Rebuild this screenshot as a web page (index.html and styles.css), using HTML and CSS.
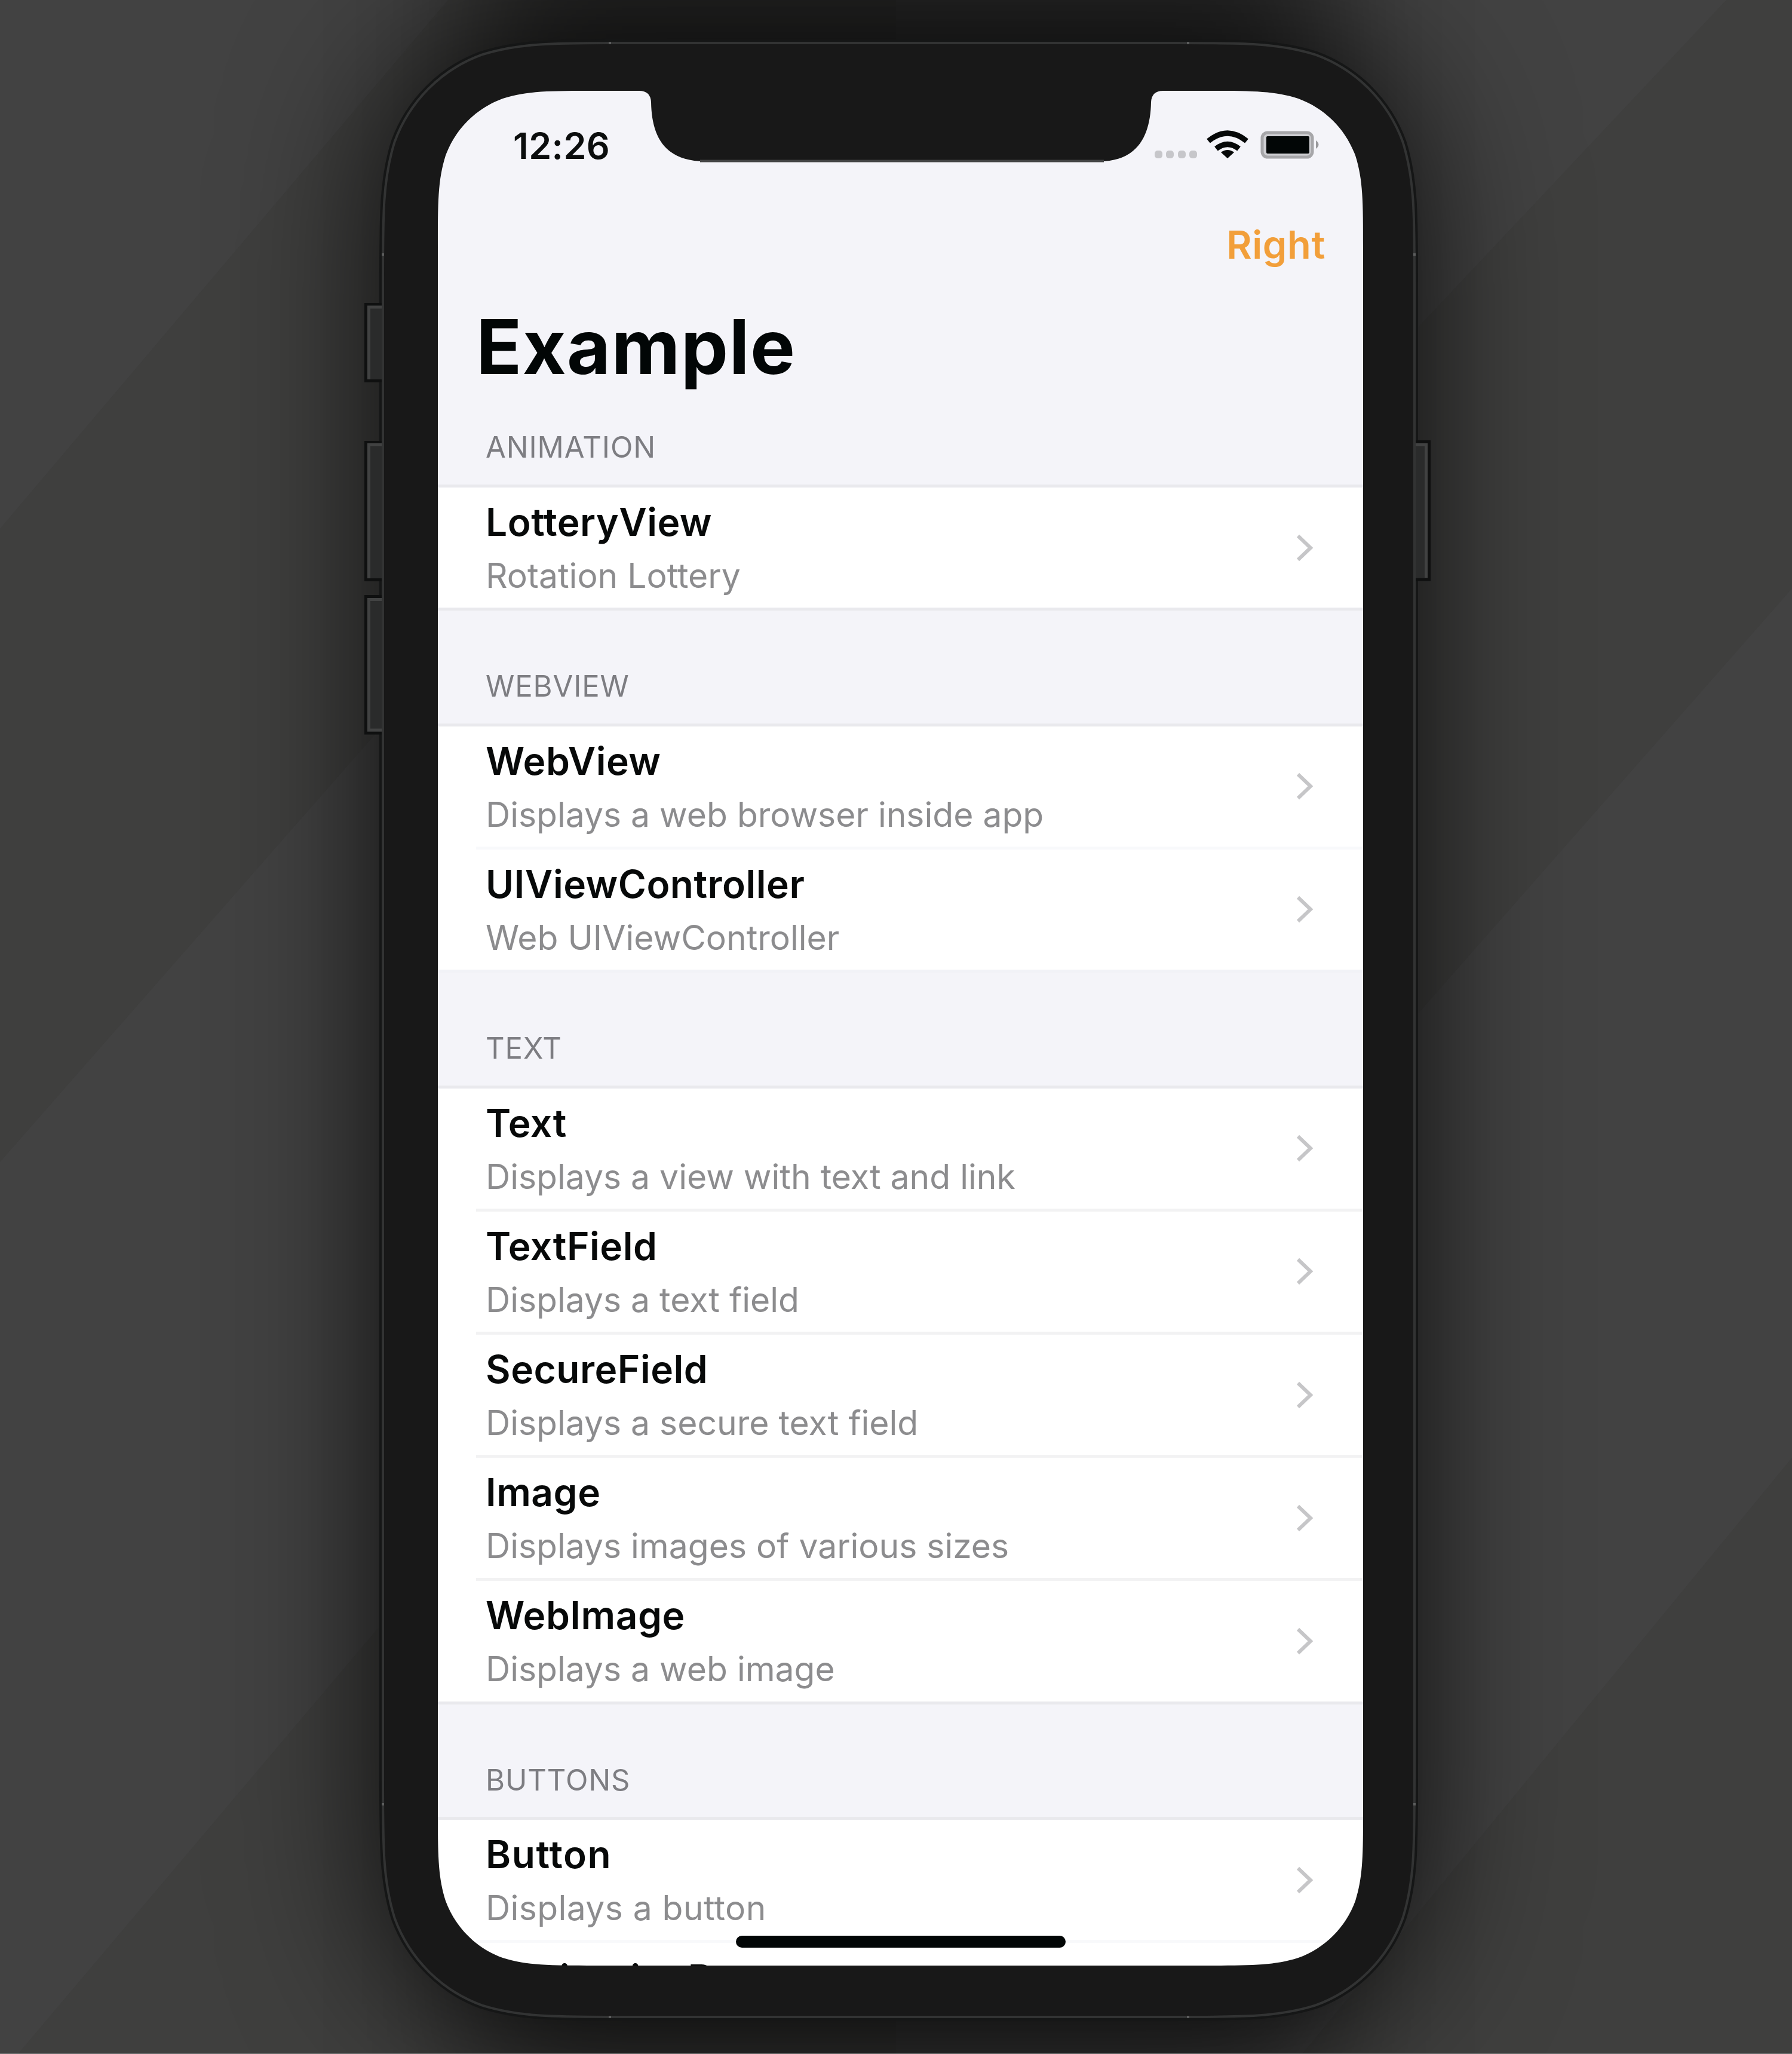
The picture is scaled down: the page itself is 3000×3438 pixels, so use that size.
FILE: index.html
```html
<!DOCTYPE html>
<html lang="en">
<head>
<meta charset="utf-8">
<title>Example</title>
<link rel="stylesheet" href="styles.css">
</head>
<body>
<main class="stage">
  <svg class="backdrop" viewBox="0 0 3000 3438" aria-hidden="true">
    <rect width="3000" height="3438" fill="#424242"/>
    <g fill="#3f3f3e">
      <path d="M0 885L750 0H1500V235L0 1945Z"/>
      <path d="M30 3438L1500 1700V3438Z"/>
      <path d="M2890 0H3000V985L1500 2690V1476Z"/>
      <path d="M3000 2440L2180 3438H3000Z"/>
    </g>
  </svg>
  <div class="shade"></div>
  <div class="phone-shadow"></div>
  <div class="screen">
    <header class="status-bar">
      <span class="time">12:26</span>
      <svg class="status-icons" viewBox="0 0 284 56" aria-hidden="true">
        <g fill="#c6c6ca"><rect x="0" y="39" width="13" height="13" rx="5"/><rect x="19" y="39" width="13" height="13" rx="5"/><rect x="39" y="39" width="13" height="13" rx="5"/><rect x="58" y="39" width="13" height="13" rx="5"/></g>
        <g fill="none" stroke="#060808" stroke-width="9"><path d="M90 23Q122 -3 154 23"/><path d="M103 36Q122 21 141 36"/></g>
        <path fill="#060808" d="M111 42Q122 34 133 42L122 52Z"/>
        <rect x="180" y="9" width="84" height="41" rx="9" fill="#cfcfd3" stroke="#a6a6a9" stroke-width="5"/>
        <rect x="187" y="15" width="72" height="29" rx="2" fill="#020606"/>
        <path fill="#9a9a9d" d="M270 22Q279 29 270 36Z"/>
      </svg>
    </header>
    <nav class="nav-bar"><a class="nav-action">Right</a></nav>
    <h1 class="title">Example</h1>
    <section class="group first">
      <h2 class="group-name">ANIMATION</h2>
      <ul class="rows">
        <li class="row"><div class="label"><b>LotteryView</b><span>Rotation Lottery</span></div><svg class="chevron" viewBox="0 0 30 48"><path d="M3 4L24 24L3 44"/></svg></li>
      </ul>
    </section>
    <section class="group">
      <h2 class="group-name">WEBVIEW</h2>
      <ul class="rows faint-end">
        <li class="row"><div class="label"><b>WebView</b><span>Displays a web browser inside app</span></div><svg class="chevron" viewBox="0 0 30 48"><path d="M3 4L24 24L3 44"/></svg></li>
        <li class="row faint"><div class="label"><b>UIViewController</b><span>Web UIViewController</span></div><svg class="chevron" viewBox="0 0 30 48"><path d="M3 4L24 24L3 44"/></svg></li>
      </ul>
    </section>
    <section class="group">
      <h2 class="group-name">TEXT</h2>
      <ul class="rows">
        <li class="row"><div class="label"><b>Text</b><span>Displays a view with text and link</span></div><svg class="chevron" viewBox="0 0 30 48"><path d="M3 4L24 24L3 44"/></svg></li>
        <li class="row"><div class="label"><b>TextField</b><span>Displays a text field</span></div><svg class="chevron" viewBox="0 0 30 48"><path d="M3 4L24 24L3 44"/></svg></li>
        <li class="row"><div class="label"><b>SecureField</b><span>Displays a secure text field</span></div><svg class="chevron" viewBox="0 0 30 48"><path d="M3 4L24 24L3 44"/></svg></li>
        <li class="row"><div class="label"><b>Image</b><span>Displays images of various sizes</span></div><svg class="chevron" viewBox="0 0 30 48"><path d="M3 4L24 24L3 44"/></svg></li>
        <li class="row"><div class="label"><b>WebImage</b><span>Displays a web image</span></div><svg class="chevron" viewBox="0 0 30 48"><path d="M3 4L24 24L3 44"/></svg></li>
      </ul>
    </section>
    <section class="group">
      <h2 class="group-name">BUTTONS</h2>
      <ul class="rows">
        <li class="row"><div class="label wide"><b>Button</b><span>Displays a button</span></div><svg class="chevron" viewBox="0 0 30 48"><path d="M3 4L24 24L3 44"/></svg></li>
        <li class="row faint clipped"><div class="label"><b>NavigationButton</b></div></li>
      </ul>
    </section>
  </div>
  <div class="home-indicator"></div>
  <svg class="frame" viewBox="0 0 3000 3438" aria-hidden="true">
    <defs>
      <path id="shell" d="M1041.500 72H1967.500c115.300 0 173 0 235 19.600c67.800 24.700 121.200 78.100 145.900 145.900c19.600 62 19.600 119.700 19.600 235V2975.500c0 115.300 0 173 -19.600 235c-24.700 67.800 -78.100 121.200 -145.900 145.900c-62 19.600 -119.700 19.600 -235 19.600H1041.500c-115.300 0 -173 0 -235 -19.600c-67.800 -24.700 -121.200 -78.100 -145.900 -145.900c-19.600 -62 -19.600 -119.700 -19.600 -235V472.500c0 -115.300 0 -173 19.600 -235c24.700 -67.800 78.100 -121.200 145.900 -145.900c62 -19.600 119.700 -19.600 235 -19.600Z"/>
    </defs>
    <use href="#shell" fill="none" stroke="#151616" stroke-width="12"/>
    <path fill="#2a2b2b" stroke="#0f1010" stroke-width="5" d="M644 509.500H612.500V637.500H644M644 740.500H612.500V970.500H644M644 998.500H612.500V1227H644M2366 739.500H2392.500V970H2366"/>
    <path fill="none" stroke="#414242" stroke-width="5" d="M644 514H617.500V635M644 744.500H617.500V968M644 1003.500H617.500V1222H644M2366 744.500H2387.500V967"/>
    <path fill="#181818" fill-rule="evenodd" d="M1041.500 72H1967.500c115.300 0 173 0 235 19.600c67.800 24.700 121.200 78.100 145.900 145.900c19.600 62 19.600 119.700 19.600 235V2975.500c0 115.300 0 173 -19.600 235c-24.700 67.800 -78.100 121.200 -145.900 145.900c-62 19.600 -119.700 19.600 -235 19.600H1041.500c-115.300 0 -173 0 -235 -19.600c-67.800 -24.700 -121.200 -78.100 -145.900 -145.900c-19.600 -62 -19.600 -119.700 -19.600 -235V472.500c0 -115.300 0 -173 19.600 -235c24.700 -67.800 78.100 -121.200 145.900 -145.900c62 -19.600 119.700 -19.600 235 -19.600Z
      M996 152H1070Q1089 152 1090 171C1091 225 1110 270 1180 270H1841C1906 270 1926 225 1927 171Q1928 152 1947 152H2019c75.800 0 113.600 0 154.400 12.900c44.500 16.200 79.500 51.200 95.700 95.700c12.900 40.800 12.900 78.600 12.900 154.400V3027c0 75.800 0 113.600 -12.900 154.400c-16.200 44.500 -51.200 79.500 -95.700 95.700c-40.800 12.900 -78.600 12.900 -154.400 12.900H996c-75.800 0 -113.600 0 -154.400 -12.900c-44.500 -16.200 -79.500 -51.200 -95.700 -95.700c-12.900 -40.800 -12.900 -78.600 -12.900 -154.400V415c0 -75.800 0 -113.600 12.900 -154.400c16.200 -44.500 51.200 -79.500 95.700 -95.700c40.800 -12.900 78.600 -12.900 154.400 -12.900Z"/>
    <use href="#shell" fill="none" stroke="#323333" stroke-width="4"/>
    <path stroke="#444545" stroke-width="4" d="M1172 269.500H1848"/>
    <g fill="#5c5d5d"><path d="M1019 70h4v4h-4zM1987 70h4v4h-4zM639 424h4v4h-4zM2366 424h4v4h-4zM639 3018h4v4h-4zM2366 3018h4v4h-4zM1019 3374h4v4h-4zM1987 3374h4v4h-4z"/></g>
    <path fill="#777878" d="M0 3437H3000V3438H0Z"/>
  </svg>
</main>
</body>
</html>
```
FILE: styles.css
```css
* { box-sizing: border-box; margin: 0; padding: 0; }
body { width: 3000px; height: 3438px; overflow: hidden; background: #3b3b3a; font-family: Inter, sans-serif; }
.stage {
  position: relative;
  width: 3000px;
  height: 3438px;
  padding: 152px 718px 148px 733px;
  overflow: hidden;
}
.backdrop, .frame { position: absolute; left: 0; top: 0; width: 3000px; height: 3438px; }
.shade { position: absolute; left: 790px; top: -150px; width: 1430px; height: 3640px; background: rgba(0, 0, 0, .46); filter: blur(110px); }
.phone-shadow { position: absolute; left: 641px; top: 72px; width: 1727px; height: 3304px; border-radius: 262px; box-shadow: 0 0 580px rgba(0, 0, 0, .8); }
.screen { position: relative; width: 1549px; height: 3138px; overflow: hidden; background: #f4f4f9; }
.status-bar { display: flex; justify-content: space-between; height: 156px; padding: 61px 65px 0 126px; }
.time { font-size: 61px; font-weight: 600; line-height: 62px; letter-spacing: .4px; color: #0b0d0d; }
.status-icons { width: 284px; height: 56px; }
.nav-bar { display: flex; justify-content: flex-end; height: 164px; padding: 62px 63px 0 0; }
.nav-action { font-size: 65px; line-height: 80px; letter-spacing: .6px; font-weight: 600; color: #f29f3a; }
.title { height: 215px; padding: 31px 0 0 64px; font-size: 126px; line-height: 154px; letter-spacing: 1.3px; font-weight: 700; color: #020606; }
.group-name { height: 188.5px; padding: 98px 0 0 80px; font-size: 49px; line-height: 58px; letter-spacing: .9px; font-weight: 400; color: #7d7d82; }
.first .group-name { height: 124px; padding-top: 33px; }
.rows { list-style: none; background: #fff; border-top: 5px solid #e9e9ed; border-bottom: 5px solid #e9e9ed; }
.faint-end { border-bottom-color: #f1f2f7; }
.row { display: flex; justify-content: space-between; align-items: center; height: 201.2px; margin-left: 64px; padding: 0 82px 0 16px; }
.row + .row { height: 206.2px; border-top: 5px solid #f2f2f3; }
.row + .faint { border-top-color: #f8f9fb; }
.clipped { overflow: hidden; }
.row.clipped { height: 120px; align-items: flex-start; }
.label { display: flex; flex-direction: column; padding-top: 5px; }
.label b { font-size: 64px; line-height: 90px; letter-spacing: .5px; font-weight: 600; color: #070909; }
.label span { font-size: 57px; line-height: 90px; letter-spacing: 0; color: #8c8c8e; }
.wide b { letter-spacing: 1.5px; }
.wide span { letter-spacing: .4px; }
.row.clipped b { padding-top: 10px; letter-spacing: .6px; }
.chevron { width: 30px; height: 48px; fill: none; stroke: #c6c6c8; stroke-width: 6px; }
.home-indicator { position: absolute; left: 1232px; top: 3240px; width: 552px; height: 20px; border-radius: 10px; background: #020606; }
```
